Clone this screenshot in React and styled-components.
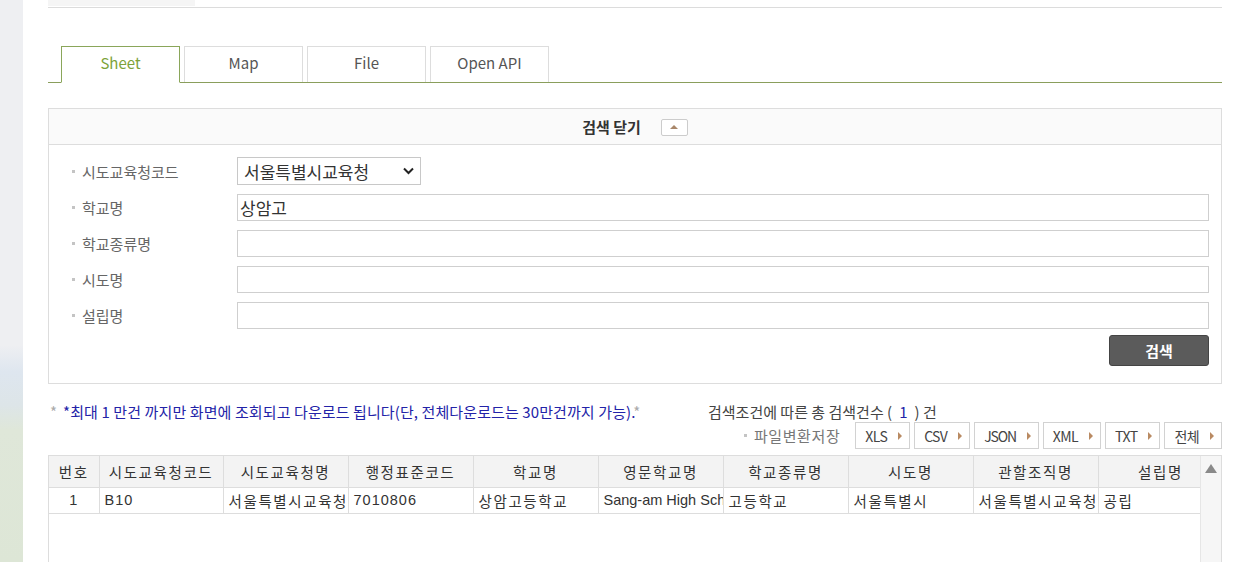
import React from "react";
import styled, { createGlobalStyle } from "styled-components";

const GlobalStyle = createGlobalStyle`
  html, body { margin: 0; padding: 0; background: #fff; }
  body {
    font-family: "Noto Sans CJK KR", "Noto Sans", sans-serif;
    color: #333;
    overflow: hidden;
  }
  * { box-sizing: border-box; }
`;

const Page = styled.div`
  display: flex;
  height: 562px;
  overflow: hidden;
`;

const SideStrip = styled.div`
  flex: 0 0 23px;
  background: linear-gradient(
    to bottom,
    #eeeff2 0,
    #eeeff2 345px,
    #dee6ef 372px,
    #dde5e8 405px,
    #dfe7d9 430px,
    #dde6d6 100%
  );
`;

const Main = styled.div`
  flex: 1;
  padding: 0 25px;
  min-width: 0;
`;

const TopBar = styled.div`
  height: 8px;
  border-bottom: 1px solid #dcdcdc;
`;

const TopStub = styled.div`
  width: 147px;
  height: 6px;
  background: #f5f5f5;
`;

const TabList = styled.div`
  display: flex;
  gap: 4px;
  margin-top: 38px;
  padding-left: 13px;
  border-bottom: 1px solid #8a9e5c;
  height: 37px;
`;

const Tab = styled.div`
  width: 119px;
  display: flex;
  align-items: center;
  justify-content: center;
  padding-bottom: 4px;
  font-size: 15px;
  color: ${(p) => (p.$active ? "#7da23a" : "#555")};
  border: 1px solid ${(p) => (p.$active ? "#8aa65a" : "#dddddd")};
  border-bottom: ${(p) => (p.$active ? "1px solid #fff" : "none")};
  background: #fff;
  ${(p) => (p.$active ? "height: 37px; margin-bottom: -1px;" : "height: 36px;")}
`;

const SearchBox = styled.div`
  margin-top: 25px;
  border: 1px solid #dddddd;
`;

const SearchHead = styled.div`
  height: 36px;
  background: #fafafa;
  border-bottom: 1px solid #dddddd;
  display: flex;
  align-items: center;
  justify-content: center;
  gap: 20px;
`;

const HeadTitle = styled.span`
  font-size: 15px;
  font-weight: 700;
  color: #333;
`;

const ToggleBtn = styled.button`
  width: 27px;
  height: 17px;
  border: 1px solid #cccccc;
  border-radius: 2px;
  background: #fff;
  padding: 0;
  display: flex;
  align-items: center;
  justify-content: center;
  margin-top: 1px;
`;

const UpTri = styled.span`
  width: 0;
  height: 0;
  border-left: 4px solid transparent;
  border-right: 4px solid transparent;
  border-bottom: 4px solid #a9876a;
`;

const Form = styled.div`
  display: grid;
  grid-template-columns: 188px 1fr;
  row-gap: 9px;
  padding: 12px 12px 0 0;
  align-items: center;
`;

const Label = styled.div`
  display: flex;
  align-items: center;
  gap: 7px;
  padding-left: 23px;
  font-size: 15px;
  color: #666;
  height: 27px;
`;

const Bullet = styled.span`
  width: 3px;
  height: 3px;
  background: #c4c4c4;
  flex: 0 0 3px;
`;

const TextInput = styled.div`
  height: 27px;
  border: 1px solid #cfcfcf;
  background: #fff;
  font-size: 17px;
  color: #333;
  padding: 0 2px;
  display: flex;
  align-items: center;
`;

const SelectBox = styled.div`
  position: relative;
  width: 184px;
  height: 28px;
  border: 1px solid #c8c8c8;
  background: #fff;
  font-size: 17px;
  color: #333;
  display: flex;
  align-items: center;
  padding-left: 6px;
`;

const Chevron = styled.svg`
  position: absolute;
  right: 6px;
  top: 9px;
`;

const ButtonRow = styled.div`
  display: flex;
  justify-content: flex-end;
  padding: 6px 12px 17px 0;
`;

const SearchButton = styled.button`
  width: 100px;
  height: 31px;
  background: #5b5b5b;
  border: 1px solid #444;
  border-radius: 3px;
  color: #fff;
  font-family: inherit;
  font-size: 15px;
  font-weight: 700;
`;

const InfoGrid = styled.div`
  display: grid;
  grid-template-columns: 1fr 514px;
  margin-top: 16px;
`;

const Notice = styled.div`
  font-size: 15px;
  letter-spacing: 0.1px;
  color: #2323a8;
  display: flex;
  align-items: center;
  gap: 6px;
  padding-left: 2px;
  height: 22px;
  white-space: nowrap;
`;

const Star = styled.span`
  color: #aaa;
`;

const Count = styled.div`
  font-size: 15px;
  color: #444;
  height: 22px;
  display: flex;
  align-items: center;
  white-space: nowrap;
`;

const CountNum = styled.span`
  color: #2323a8;
  margin: 0 7px;
`;

const ExportRow = styled.div`
  grid-column: 2;
  display: flex;
  justify-content: flex-end;
  align-items: center;
  gap: 4px;
`;

const ExportLabel = styled(Label)`
  padding-left: 0;
  margin-right: 11px;
  color: #777;
  letter-spacing: 0.6px;
`;

const ExportBtn = styled.div`
  height: 27px;
  border: 1px solid #d2d2d2;
  background: #fff;
  display: flex;
  align-items: center;
  gap: 11px;
  padding: 0 7px 0 9px;
  font-size: 14px;
  color: #444;
  letter-spacing: ${(p) => (p.$narrow ? "-1.2px" : "-0.6px")};
`;

const RightTri = styled.span`
  width: 0;
  height: 0;
  border-top: 4px solid transparent;
  border-bottom: 4px solid transparent;
  border-left: 4px solid #b98a62;
`;

const TableWrap = styled.div`
  margin-top: 6px;
  border: 1px solid #dddddd;
  height: 140px;
  display: flex;
  overflow: hidden;
`;

const TableArea = styled.div`
  flex: 1;
  overflow: hidden;
`;

const Table = styled.table`
  border-collapse: collapse;
  table-layout: fixed;
  width: 1174px;
  font-family: "Liberation Sans", "Noto Sans CJK KR", sans-serif;
  font-size: 14.5px;
  letter-spacing: 1.6px;
  color: #333;
`;

const Th = styled.th`
  height: 31px;
  background: #f3f3f3;
  font-weight: 400;
  text-align: center;
  border-right: 1px solid #dddddd;
  border-bottom: 1px solid #dddddd;
  white-space: nowrap;
  overflow: hidden;
  padding: 0;
`;

const Td = styled.td`
  height: 26px;
  border-right: 1px solid #dddddd;
  border-bottom: 1px solid #dddddd;
  white-space: nowrap;
  overflow: hidden;
  text-overflow: clip;
  padding: ${(p) => (p.$center ? "0" : "0 0 0 5px")};
  text-align: ${(p) => (p.$center ? "center" : "left")};
  letter-spacing: ${(p) => (p.$latin === "en" ? "0px" : p.$latin === "num" ? "1px" : "1.6px")};
`;

const Scrollbar = styled.div`
  flex: 0 0 21px;
  background: #f6f6f6;
  border-left: 1px solid #e6e6e6;
  display: flex;
  justify-content: center;
  padding-top: 8px;
`;

const ScrollUp = styled.span`
  width: 0;
  height: 0;
  border-left: 6px solid transparent;
  border-right: 6px solid transparent;
  border-bottom: 9px solid #8a8a8a;
`;

const fields = [
  { label: "학교명", value: "상암고" },
  { label: "학교종류명", value: "" },
  { label: "시도명", value: "" },
  { label: "설립명", value: "" },
];

const exports = ["XLS", "CSV", "JSON", "XML", "TXT", "전체"];

const columns = [
  { name: "번호", w: 50 },
  { name: "시도교육청코드", w: 124 },
  { name: "시도교육청명", w: 125 },
  { name: "행정표준코드", w: 125 },
  { name: "학교명", w: 125 },
  { name: "영문학교명", w: 125 },
  { name: "학교종류명", w: 125 },
  { name: "시도명", w: 125 },
  { name: "관할조직명", w: 125 },
  { name: "설립명", w: 125 },
];

const row = [
  { v: "1", kind: "num" },
  { v: "B10", kind: "num" },
  { v: "서울특별시교육청" },
  { v: "7010806", kind: "num" },
  { v: "상암고등학교" },
  { v: "Sang-am High School", kind: "en" },
  { v: "고등학교" },
  { v: "서울특별시" },
  { v: "서울특별시교육청" },
  { v: "공립" },
];

export default function App() {
  return (
    <>
      <GlobalStyle />
      <Page>
        <SideStrip />
        <Main>
          <TopBar>
            <TopStub />
          </TopBar>

          <TabList>
            <Tab $active>Sheet</Tab>
            <Tab>Map</Tab>
            <Tab>File</Tab>
            <Tab>Open API</Tab>
          </TabList>

          <SearchBox>
            <SearchHead>
              <HeadTitle>검색 닫기</HeadTitle>
              <ToggleBtn aria-label="닫기">
                <UpTri />
              </ToggleBtn>
            </SearchHead>
            <Form>
              <Label>
                <Bullet />
                시도교육청코드
              </Label>
              <div>
                <SelectBox>
                  서울특별시교육청
                  <Chevron width="11" height="8" viewBox="0 0 11 8">
                    <path d="M1 1.5 L5.5 6 L10 1.5" fill="none" stroke="#222" strokeWidth="2" />
                  </Chevron>
                </SelectBox>
              </div>
              {fields.map((f) => (
                <React.Fragment key={f.label}>
                  <Label>
                    <Bullet />
                    {f.label}
                  </Label>
                  <TextInput>{f.value}</TextInput>
                </React.Fragment>
              ))}
            </Form>
            <ButtonRow>
              <SearchButton>검색</SearchButton>
            </ButtonRow>
          </SearchBox>

          <InfoGrid>
            <Notice>
              <Star>*</Star>
              <span>*최대 1 만건 까지만 화면에 조회되고 다운로드 됩니다(단, 전체다운로드는 30만건까지 가능).<Star>*</Star></span>
            </Notice>
            <Count>
              검색조건에 따른 총 검색건수 (<CountNum>1</CountNum>) 건
            </Count>
            <ExportRow>
              <ExportLabel>
                <Bullet />
                파일변환저장
              </ExportLabel>
              {exports.map((e) => (
                <ExportBtn key={e} $narrow={e === "JSON"}>
                  {e}
                  <RightTri />
                </ExportBtn>
              ))}
            </ExportRow>
          </InfoGrid>

          <TableWrap>
            <TableArea>
              <Table>
                <colgroup>
                  {columns.map((c) => (
                    <col key={c.name} style={{ width: c.w }} />
                  ))}
                </colgroup>
                <thead>
                  <tr>
                    {columns.map((c) => (
                      <Th key={c.name}>{c.name}</Th>
                    ))}
                  </tr>
                </thead>
                <tbody>
                  <tr>
                    {row.map((c, i) => (
                      <Td key={i} $center={i === 0} $latin={c.kind}>
                        {c.v}
                      </Td>
                    ))}
                  </tr>
                </tbody>
              </Table>
            </TableArea>
            <Scrollbar>
              <ScrollUp />
            </Scrollbar>
          </TableWrap>
        </Main>
      </Page>
    </>
  );
}
